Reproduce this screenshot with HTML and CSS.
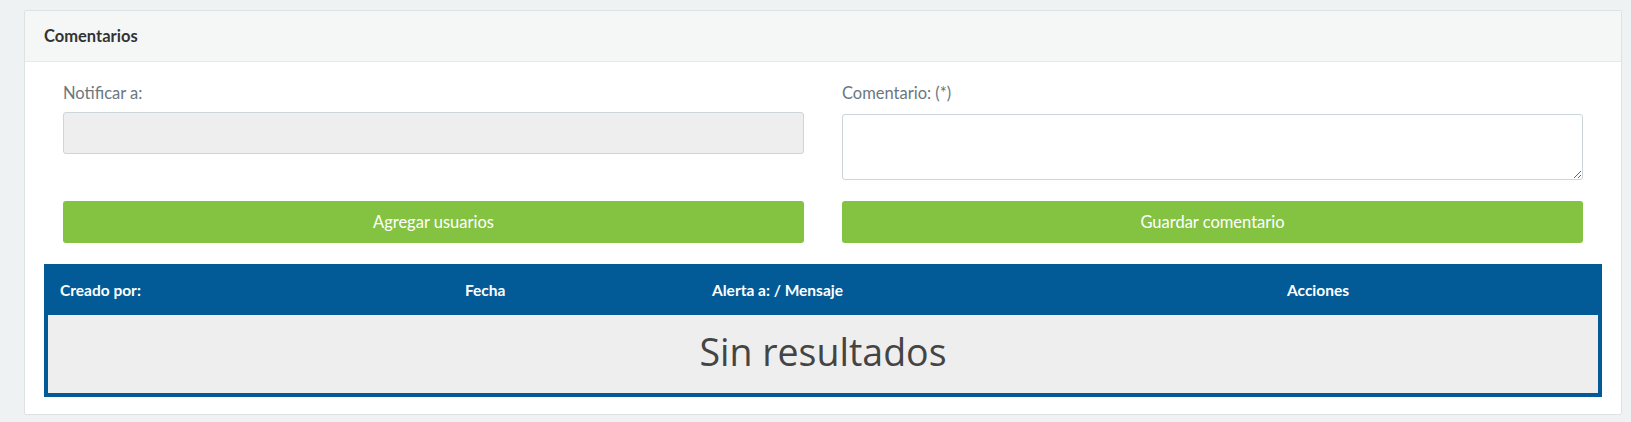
FILE: index.html
```html
<!DOCTYPE html>
<html lang="es">
<head>
<meta charset="utf-8">
<title>Comentarios</title>
<link rel="stylesheet" href="styles.css">
</head>
<body>
<div class="page">
  <section class="panel">
    <header class="panel-head">Comentarios</header>
    <div class="panel-body">
      <div class="form-grid">
        <label class="lbl">Notificar a:</label>
        <label class="lbl">Comentario: (*)</label>
        <div class="input disabled"></div>
        <textarea class="textarea"></textarea>
        <button class="btn">Agregar usuarios</button>
        <button class="btn">Guardar comentario</button>
      </div>
      <div class="table">
        <div class="thead">
          <div class="th c1">Creado por:</div>
          <div class="th c2">Fecha</div>
          <div class="th c3">Alerta a: / Mensaje</div>
          <div class="th c4">Acciones</div>
        </div>
        <div class="empty">Sin resultados</div>
      </div>
    </div>
  </section>
</div>
</body>
</html>
```
FILE: styles.css
```css
* { box-sizing: border-box; }
html, body { margin: 0; padding: 0; }
body {
  background: #eef2f3;
  font-family: "Lato", "Liberation Sans", sans-serif;
  width: 1631px;
  height: 422px;
  overflow: hidden;
}
.page { padding: 10px 9px 0 24px; }
.panel {
  background: #fff;
  border: 1px solid #dde3e4;
  border-radius: 2px;
  height: 405px;
}
.panel-head {
  background: #f5f7f6;
  border-bottom: 1px solid #e4e9ea;
  height: 51px;
  padding: 15px 0 0 19px;
  font-weight: 700;
  font-size: 16.5px;
  color: #333;
  line-height: 20px;
}
.panel-body { padding: 0 19px; }
.form-grid {
  display: grid;
  grid-template-columns: 1fr 1fr;
  grid-template-rows: 28px 68px 63px;
  column-gap: 38px;
  padding: 22px 19px 0;
  align-items: start;
}
.lbl {
  font-size: 16.5px;
  color: #6b777f;
  line-height: 18px;
}
.input {
  height: 42px;
  border: 1px solid #ccd5d7;
  border-radius: 3px;
}
.input.disabled { background: #eeeeee; }
.textarea {
  margin: 2px 0 0;
  height: 66px;
  border: 1px solid #ccd5d7;
  border-radius: 3px;
  resize: vertical;
  font: inherit;
  display: block;
  width: 100%;
}
.btn {
  margin-top: 21px;
  height: 42px;
  background: #84c341;
  border: none;
  border-radius: 3px;
  color: #fff;
  font-family: inherit;
  font-size: 16.5px;
  cursor: pointer;
}
.table {
  margin-top: 21px;
  border: 4px solid #025a97;
  border-top: none;
}
.thead {
  display: flex;
  background: #025a97;
  height: 51px;
  align-items: center;
}
.th {
  color: #fff;
  font-size: 15.5px;
  font-weight: 700;
  padding-left: 12px;
}
.c1 { width: 405px; }
.c2 { width: 247px; }
.c3 { width: 575px; }
.c4 { flex: 1; }
.empty {
  background: #eeeeee;
  height: 78px;
  text-align: center;
  font-family: "Open Sans", sans-serif;
  font-size: 37.5px;
  color: #444;
  line-height: 74px;
}
```
